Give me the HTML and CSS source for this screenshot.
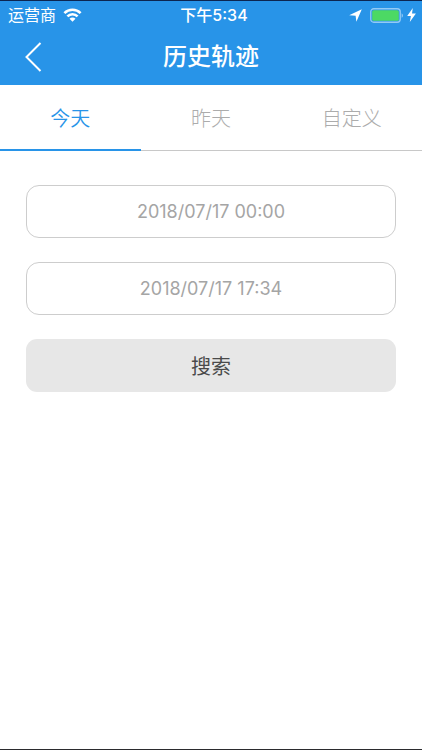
FILE: index.html
```html
<!DOCTYPE html>
<html lang="zh-CN">
<head>
    <meta charset="UTF-8">
    <meta name="viewport" content="width=device-width, initial-scale=1.0">
    <title>历史轨迹</title>
    <link rel="stylesheet" href="styles.css">
</head>
<body>
    <header class="header">
        <div class="status-bar">
            <div class="status-left">
                <span>运营商</span>
                <svg class="icon-wifi" width="19" height="14" viewBox="0 0 18 14" fill="none" stroke="#fff" stroke-width="2.6">
                    <path d="M0.9 5.1a11.5 11.5 0 0 1 16.2 0"/>
                    <path d="M3.9 8.4a7.2 7.2 0 0 1 10.2 0"/>
                    <path d="M9 13.8L6 10.8a4.2 4.2 0 0 1 6 0z" fill="#fff" stroke="none"/>
                </svg>
            </div>
            <span class="status-time">下午5:34</span>
            <div class="status-right">
                <svg width="13" height="13" viewBox="0 0 13 13">
                    <path d="M12.8 0.2L7.4 12.8L6.6 6.7L0.2 6.2z" fill="#fff"/>
                </svg>
                <svg width="34" height="15" viewBox="0 0 34 15">
                    <rect x="0.75" y="0.75" width="29.5" height="13.5" rx="3" fill="none" stroke="#93caf5" stroke-width="1.3"/>
                    <rect x="2.2" y="2.2" width="26.6" height="10.6" rx="1.6" fill="#4cd964"/>
                    <path d="M31.6 5.2c1.8 0.8 1.8 3.8 0 4.6z" fill="#93caf5"/>
                </svg>
                <svg width="9" height="14" viewBox="0 0 9 14">
                    <path d="M5.8 0L0.2 8H3.9L2.8 14L8.9 5.6H5z" fill="#fff"/>
                </svg>
            </div>
        </div>
        <div class="nav-bar">
            <button class="back-btn" type="button" aria-label="返回">
                <svg width="18" height="30" viewBox="0 0 18 30" fill="none" stroke="#fff" stroke-width="2">
                    <path d="M16.5 1L2.5 15L16.5 29"/>
                </svg>
            </button>
            <h1>历史轨迹</h1>
        </div>
    </header>

    <nav class="tabs">
        <button class="tab active" type="button">今天</button>
        <button class="tab" type="button">昨天</button>
        <button class="tab" type="button">自定义</button>
    </nav>

    <form class="search-form">
        <input class="date-input" type="text" aria-label="开始时间" value="2018/07/17 00:00">
        <input class="date-input" type="text" aria-label="结束时间" value="2018/07/17 17:34">
        <button class="search-btn" type="button">搜索</button>
    </form>
</body>
</html>
```

FILE: styles.css
```css
* {
    margin: 0;
    padding: 0;
    box-sizing: border-box;
}

body {
    min-height: 100vh;
    border-bottom: 1px solid #2b2b2e;
    font-family: Inter, "Noto Sans CJK SC", sans-serif;
    background: #fff;
}

button,
input {
    font-family: inherit;
    border: none;
    background: none;
}

svg {
    display: block;
}

.header {
    background: #2894e8;
    border-top: 1px solid #0c2550;
    color: #fff;
}

.status-bar {
    display: grid;
    grid-template-columns: 1fr auto 1fr;
    align-items: center;
    height: 28px;
    padding: 0 6px 0 8px;
    font-size: 16px;
    line-height: 28px;
}

.status-left,
.status-right {
    display: flex;
    align-items: center;
}

.status-left {
    gap: 7px;
}

.status-time {
    padding-left: 4px;
    font-weight: 500;
}

.status-right {
    justify-content: flex-end;
    gap: 8px;
}

.status-right svg:last-child {
    margin-left: -5px;
}

.nav-bar {
    display: grid;
    grid-template-columns: 60px 1fr 60px;
    align-items: center;
    height: 56px;
}

.back-btn {
    padding-left: 24px;
    cursor: pointer;
}

.nav-bar h1 {
    font-size: 24px;
    font-weight: 500;
    line-height: 56px;
    text-align: center;
}

.tabs {
    display: flex;
    border-bottom: 1px solid #c8c8c8;
}

.tab {
    flex: 1;
    height: 66px;
    margin-bottom: -1px;
    border-bottom: 2px solid transparent;
    color: #acacac;
    font-size: 20px;
    font-weight: 300;
    cursor: pointer;
}

.tab.active {
    border-bottom-color: #2894e8;
    color: #2894e8;
    font-weight: 350;
}

.search-form {
    display: flex;
    flex-direction: column;
    gap: 24px;
    padding: 34px 26px;
}

.date-input {
    width: 100%;
    height: 53px;
    border: 1px solid #cdcdcd;
    border-radius: 13px;
    color: #a5a5a5;
    font-size: 18px;
    text-align: center;
}

.search-btn {
    height: 53px;
    border-radius: 11px;
    background: #e7e7e7;
    color: #4a4a4a;
    font-size: 20px;
    cursor: pointer;
}
```
